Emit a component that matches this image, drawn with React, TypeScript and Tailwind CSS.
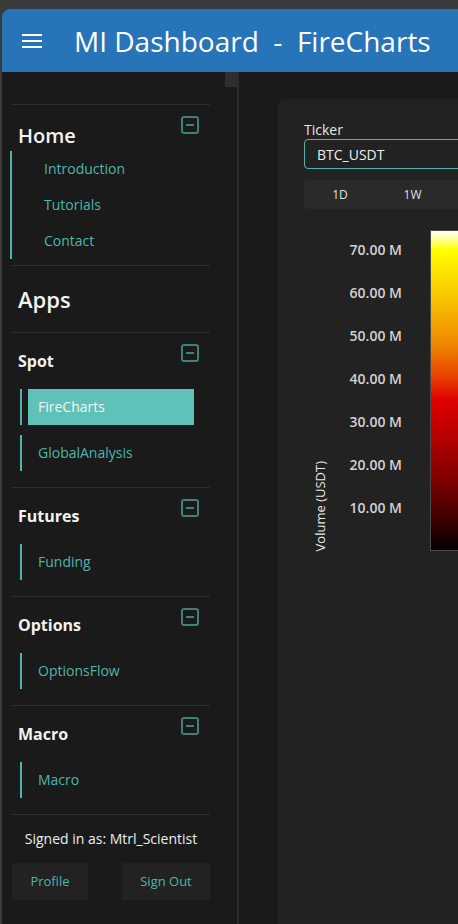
import React from "react";

const font = { fontFamily: '"Open Sans", "Noto Sans", sans-serif' };

function MinusBox() {
  return (
    <div className="w-[18px] h-[18px] rounded-[3px] border-2 border-[#3f807a] flex items-center justify-center shrink-0">
      <div className="w-[8px] h-[2px] bg-[#3f807a]" />
    </div>
  );
}

function Hr() {
  return <div className="h-px bg-[#2e2e2e]" />;
}

function Group({ title, items, active }: { title: string; items: string[]; active?: string }) {
  return (
    <div>
      <Hr />
      <div className="flex justify-between h-[40px]">
        <div className="pl-[6px] text-[16px] font-bold text-[#f2f2f2] mt-[17px] leading-[22px]">{title}</div>
        <div className="mt-[11px] mr-[11px]">
          <MinusBox />
        </div>
      </div>
      <div className="flex flex-col gap-[10px] mt-[16px] pl-[8px]">
        {items.map((it) => (
          <div key={it} className="flex h-[36px] border-l-2 border-[#4db6ac]">
            <div
              className={
                "ml-[6px] w-[166px] flex items-center pl-[10px] pb-[1px] text-[14px] " +
                (it === active ? "bg-[#5fc1b7] text-[#f4f4f4]" : "text-[#4db6ac]")
              }
            >
              {it}
            </div>
          </div>
        ))}
      </div>
      <div className="h-[16px]" />
    </div>
  );
}

export default function App() {
  const ticks = ["70.00 M", "60.00 M", "50.00 M", "40.00 M", "30.00 M", "20.00 M", "10.00 M"];
  return (
    <div className="w-[458px] h-[924px] bg-[#3a3a3a] pt-[9px] pl-[2px] overflow-hidden" style={font}>
      <div className="h-full rounded-tl-[8px] overflow-hidden flex flex-col bg-[#1a1a1a]">
        <div className="h-[63px] bg-[#2774b9] flex items-center shrink-0">
          <div className="ml-[20px] w-[20px] flex flex-col gap-[4px]">
            <div className="h-[2px] bg-white" />
            <div className="h-[2px] bg-white" />
            <div className="h-[2px] bg-white" />
          </div>
          <div className="ml-[32px] text-[28px] text-white whitespace-pre leading-none">MI Dashboard  -  FireCharts</div>
        </div>
        <div className="flex flex-1 min-h-0">
          {/* sidebar */}
          <div className="w-[223px] pl-[10px] pr-[15px] pt-[32px] shrink-0">
            <Hr />
            <div className="flex justify-between">
              <div className="pl-[6px] text-[20px] font-semibold text-[#f2f2f2] mt-[17px] leading-[28px]">Home</div>
              <div className="mt-[11px] mr-[11px]">
                <MinusBox />
              </div>
            </div>
            <div className="-ml-[2px] mt-[1px] border-l-2 border-[#4db6ac] flex flex-col">
              {["Introduction", "Tutorials", "Contact"].map((t) => (
                <div key={t} className="h-[36px] flex items-center pl-[32px] pb-[1px] text-[14px] text-[#4db6ac]">
                  {t}
                </div>
              ))}
            </div>
            <div className="h-[6px]" />
            <Hr />
            <div className="h-[66px] flex items-center pl-[6px] text-[22px] font-semibold text-[#f2f2f2]">Apps</div>
            <Group title="Spot" items={["FireCharts", "GlobalAnalysis"]} active="FireCharts" />
            <Group title="Futures" items={["Funding"]} />
            <Group title="Options" items={["OptionsFlow"]} />
            <Group title="Macro" items={["Macro"]} />
            <Hr />
            <div className="text-center text-[14px] text-[#eeeeee] mt-[14px] leading-[20px]">Signed in as: Mtrl_Scientist</div>
            <div className="flex justify-between mt-[14px]">
              <div className="w-[76px] h-[37px] bg-[#222222] flex items-center justify-center text-[13px] text-[#4db6ac]">
                Profile
              </div>
              <div className="w-[88px] h-[37px] bg-[#222222] flex items-center justify-center text-[13px] text-[#4db6ac]">
                Sign Out
              </div>
            </div>
          </div>
          {/* scrollbar track */}
          <div className="w-[12px] shrink-0">
            <div className="h-[15px] bg-[#2e2e2e]" />
          </div>
          <div className="w-[2px] bg-[#2c2c2c] shrink-0" />
          {/* main */}
          <div className="flex-1 pl-[39px] pt-[27px] min-w-0">
            <div className="h-full bg-[#222222] rounded-tl-[6px] pl-[26px] pt-[21px] w-[300px]">
              <div className="text-[14px] text-[#e6e6e6] leading-[19px]">Ticker</div>
              <div className="h-[30px] border border-[#4db6ac] rounded-[4px] flex items-center pl-[12px] text-[14px] text-[#eeeeee] bg-[#222222]">
                BTC_USDT
              </div>
              <div className="mt-[11px] h-[29px] bg-[#2a2a2a] rounded-[4px] flex text-[12px] text-[#e0e0e0]">
                <div className="w-[72px] flex items-center justify-center">1D</div>
                <div className="w-[73px] flex items-center justify-center">1W</div>
              </div>
              <div className="mt-[21px] flex h-[321px]">
                <div className="w-[32px] flex items-end justify-center">
                  <div className="text-[13px] text-[#e8e8e8] [writing-mode:vertical-rl] rotate-180 leading-[15px]">
                    Volume (USDT)
                  </div>
                </div>
                <div className="w-[66px] flex flex-col items-end pt-[10px]">
                  {ticks.map((t) => (
                    <div key={t} className="h-[43px] text-[14px] font-semibold leading-[20px] text-[#d2d2d2] whitespace-nowrap">
                      {t}
                    </div>
                  ))}
                </div>
                <div className="ml-[28px] w-[40px] h-full border border-[#4a4a4a] bg-[linear-gradient(to_bottom,#ffffff_0%,#ffff00_6%,#f8c000_22%,#f08a00_35%,#e84000_46%,#e00000_53%,#b80000_64%,#800000_78%,#400000_90%,#000000_100%)]" />
              </div>
            </div>
          </div>
        </div>
      </div>
    </div>
  );
}
